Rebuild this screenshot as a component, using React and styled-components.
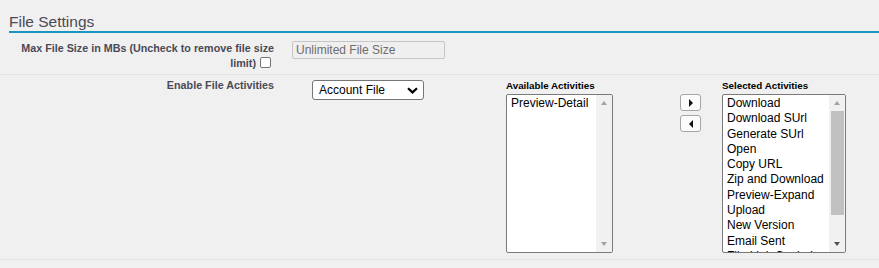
import React from 'react';
import styled, { createGlobalStyle } from 'styled-components';

const GlobalStyle = createGlobalStyle`
  html, body {
    margin: 0;
    padding: 0;
    background: #f0f0f0;
  }
  body {
    font-family: "Liberation Sans", Arial, sans-serif;
    color: #000;
  }
`;

const Page = styled.div`
  width: 879px;
  height: 268px;
  overflow: hidden;
  background: #f0f0f0;
`;

const SectionHeader = styled.h3`
  margin: 0 0 0 9px;
  padding-top: 13px;
  font-size: 15.5px;
  line-height: 18px;
  font-weight: normal;
  color: #4a4a56;
  border-bottom: 2px solid #1797c0;
`;

const DetailRow = styled.div`
  display: flex;
  align-items: flex-start;
  border-bottom: 1px solid #e3e3e3;
  padding-bottom: ${(p) => p.$pb || 0}px;
`;

const LabelCell = styled.div`
  box-sizing: border-box;
  width: 274px;
  flex-shrink: 0;
  padding: ${(p) => p.$pt}px 0 3px 12px;
  text-align: right;
  font-size: 10.75px;
  line-height: 15px;
  font-weight: bold;
  color: #4a4a56;
`;

const DataCell = styled.div`
  display: flex;
  align-items: flex-start;
  padding: ${(p) => p.$pt}px 0 0 18px;
`;

const Checkbox = styled.span`
  display: inline-block;
  box-sizing: border-box;
  width: 11px;
  height: 11px;
  margin: 0 3px 0 4px;
  vertical-align: -1px;
  border: 1px solid #767676;
  border-radius: 2px;
  background: #fff;
`;

const TextInput = styled.input`
  box-sizing: border-box;
  width: 153px;
  height: 18px;
  padding: 0 3px;
  border: 1px solid #c6c6c6;
  border-radius: 2px;
  background: #efefef;
  color: #6d6d6d;
  font-family: inherit;
  font-size: 12px;
  outline: none;
`;

const SelectBox = styled.div`
  box-sizing: border-box;
  width: 112px;
  height: 20px;
  margin-left: 20px;
  padding: 0 5px 0 6px;
  display: flex;
  align-items: center;
  justify-content: space-between;
  border: 1px solid #767676;
  border-radius: 3px;
  background: #fff;
  font-size: 12px;
`;

const DuelList = styled.div`
  display: flex;
  align-items: flex-start;
  margin-left: 82px;
`;

const ListColumn = styled.div`
  display: flex;
  flex-direction: column;
  margin-left: ${(p) => p.$ml || 0}px;
`;

const ListLabel = styled.div`
  font-size: 9.8px;
  line-height: 12px;
  font-weight: bold;
  margin-bottom: 2px;
`;

const ListBox = styled.div`
  box-sizing: border-box;
  width: ${(p) => p.$w}px;
  height: 159px;
  display: flex;
  border: 1px solid #7a7a7a;
  border-radius: 2px;
  background: #fff;
  overflow: hidden;
`;

const Options = styled.div`
  flex: 1;
  overflow: hidden;
  padding: 1px 0 0 4px;
`;

const Option = styled.div`
  font-size: 12px;
  line-height: 15.3px;
  white-space: nowrap;
`;

const ScrollTrack = styled.div`
  width: 16px;
  flex-shrink: 0;
  display: flex;
  flex-direction: column;
  background: #f1f1f1;
`;

const ScrollArrow = styled.div`
  height: 16px;
  flex-shrink: 0;
  display: flex;
  align-items: center;
  justify-content: center;

  &::after {
    content: '';
    border-left: 3.5px solid transparent;
    border-right: 3.5px solid transparent;
    ${(p) => (p.$dir === 'up' ? 'border-bottom' : 'border-top')}: 4px solid
      ${(p) => (p.$active ? '#505050' : '#a3a3a3')};
  }
`;

const ScrollSpace = styled.div`
  flex: 1;
  padding: 0 1px 0 2px;
`;

const Thumb = styled.div`
  height: 104px;
  background: #c1c1c1;
`;

const Buttons = styled.div`
  display: flex;
  flex-direction: column;
  gap: 4px;
  margin-left: 67px;
  padding-top: 14px;
`;

const MoveButton = styled.div`
  box-sizing: border-box;
  width: 21px;
  height: 17px;
  display: flex;
  align-items: center;
  justify-content: center;
  border: 1px solid #a6a6a6;
  border-radius: 3px;
  background: #fbfbfb;

  &::after {
    content: '';
    border-top: 4px solid transparent;
    border-bottom: 4px solid transparent;
    ${(p) => (p.$dir === 'right' ? 'border-left' : 'border-right')}: 4px solid #111;
  }
`;

const Chevron = () => (
  <svg width="11" height="7" viewBox="0 0 11 7">
    <path d="M1 1.2 L5.5 5.4 L10 1.2" fill="none" stroke="#000" strokeWidth="2.2" />
  </svg>
);

const available = ['Preview-Detail'];
const selected = [
  'Download',
  'Download SUrl',
  'Generate SUrl',
  'Open',
  'Copy URL',
  'Zip and Download',
  'Preview-Expand',
  'Upload',
  'New Version',
  'Email Sent',
  'File Link Copied',
];

const Scrollbar = ({ thumb, canDown }) => (
  <ScrollTrack>
    <ScrollArrow $dir="up" />
    <ScrollSpace>{thumb && <Thumb />}</ScrollSpace>
    <ScrollArrow $dir="down" $active={canDown} />
  </ScrollTrack>
);

export default function App() {
  return (
    <Page>
      <GlobalStyle />
      <SectionHeader>File Settings</SectionHeader>
      <DetailRow>
        <LabelCell $pt={8}>
          Max File Size in MBs (Uncheck to remove file size limit)
          <Checkbox />
        </LabelCell>
        <DataCell $pt={8}>
          <TextInput value="Unlimited File Size" readOnly />
        </DataCell>
      </DetailRow>
      <DetailRow $pb={6}>
        <LabelCell $pt={3}>Enable File Activities</LabelCell>
        <DataCell $pt={5}>
          <SelectBox>
            <span>Account File</span>
            <Chevron />
          </SelectBox>
          <DuelList>
            <ListColumn>
              <ListLabel>Available Activities</ListLabel>
              <ListBox $w={107}>
                <Options>
                  {available.map((a) => (
                    <Option key={a}>{a}</Option>
                  ))}
                </Options>
                <Scrollbar />
              </ListBox>
            </ListColumn>
            <Buttons>
              <MoveButton $dir="right" />
              <MoveButton $dir="left" />
            </Buttons>
            <ListColumn $ml={21}>
              <ListLabel>Selected Activities</ListLabel>
              <ListBox $w={124}>
                <Options>
                  {selected.map((s) => (
                    <Option key={s}>{s}</Option>
                  ))}
                </Options>
                <Scrollbar thumb canDown />
              </ListBox>
            </ListColumn>
          </DuelList>
        </DataCell>
      </DetailRow>
    </Page>
  );
}
